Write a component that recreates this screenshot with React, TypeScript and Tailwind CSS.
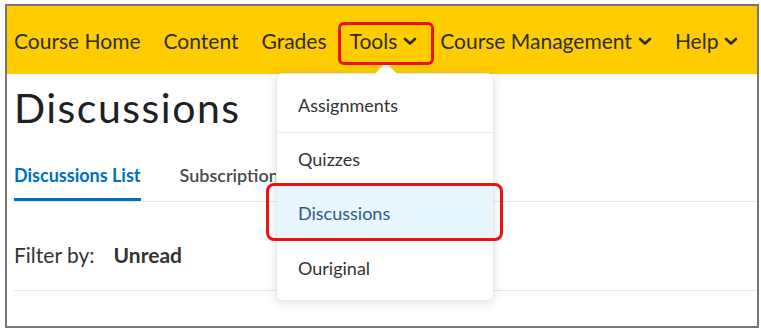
import React from 'react';

const font = { fontFamily: 'Lato, "Noto Sans", sans-serif' };

function Chevron() {
  return (
    <svg width="14" height="9" viewBox="0 0 14 9" className="shrink-0">
      <polyline
        points="2,2 7,6.5 12,2"
        fill="none"
        stroke="currentColor"
        strokeWidth="2.6"
        strokeLinecap="round"
        strokeLinejoin="round"
      />
    </svg>
  );
}

const navItems = [
  { label: 'Course Home' },
  { label: 'Content' },
  { label: 'Grades' },
  { label: 'Tools', menu: true },
  { label: 'Course Management', menu: true },
  { label: 'Help', menu: true },
];

const menuItems = ['Assignments', 'Quizzes', 'Discussions', 'Ouriginal'];

export default function App() {
  return (
    <div className="relative h-[332px] w-[761px] overflow-hidden bg-white pl-[5px] pt-[4px]" style={font}>
      <div className="h-[324px] w-[754px] overflow-hidden border-2 border-[#767676] bg-white">
        {/* top nav */}
        <div className="flex h-[68px] items-center gap-[23px] bg-[#ffcc00] pl-[7px] pt-[2px] text-[21px] text-[#2e2e2e]">
          {navItems.map((item) => (
            <div key={item.label} className="flex items-center gap-[6px] whitespace-nowrap">
              <span>{item.label}</span>
              {item.menu && <Chevron />}
            </div>
          ))}
        </div>

        <div className="pl-[7px]">
          <h1 className="mt-[10px] text-[41px] leading-[48px] font-normal tracking-[1.5px] text-[#202122]">Discussions</h1>

          <div className="mt-[30px] flex items-end gap-[39px] border-b border-[#e3e9f1] text-[18px]">
            <div className="border-b-[3px] border-[#006fbf] pb-[9px] font-bold text-[#006fbf]">Discussions List</div>
            <div className="pb-[12px] font-semibold text-[#494c4e]">Subscriptions</div>
          </div>

          <div className="flex h-[89px] items-center gap-[19px] border-b border-[#e3e9f1] pt-[18px] text-[21px] text-[#333]">
            <span>Filter by:</span>
            <span className="font-bold">Unread</span>
          </div>
        </div>
      </div>

      {/* dropdown menu */}
      <div className="absolute left-[276px] top-[73px] h-[228px] w-[218px] rounded-[6px] border border-[#e3e9f1] bg-white shadow-[0_2px_12px_rgba(0,0,0,0.12)]">
        <div className="absolute left-[101px] top-[-8px] h-[16px] w-[16px] rotate-45 rounded-[2px] bg-white" />
        <div className="relative pt-[5px]">
          {menuItems.map((label, i) => (
            <div
              key={label}
              className={`flex h-[54px] items-center pl-[21px] text-[18px] ${
                i < menuItems.length - 1 ? 'border-b border-[#e8ecf0]' : ''
              } ${label === 'Discussions' ? 'bg-[#e8f7fe] text-[#2b5b8b]' : 'text-[#333]'}`}
            >
              {label}
            </div>
          ))}
        </div>
      </div>

      {/* annotation boxes */}
      <div className="absolute left-[338px] top-[22px] h-[43px] w-[96px] rounded-[6px] border-[3px] border-[#ee1111]" />
      <div className="absolute left-[266px] top-[183px] h-[58px] w-[237px] rounded-[8px] border-[3px] border-[#ee1111]" />
    </div>
  );
}
